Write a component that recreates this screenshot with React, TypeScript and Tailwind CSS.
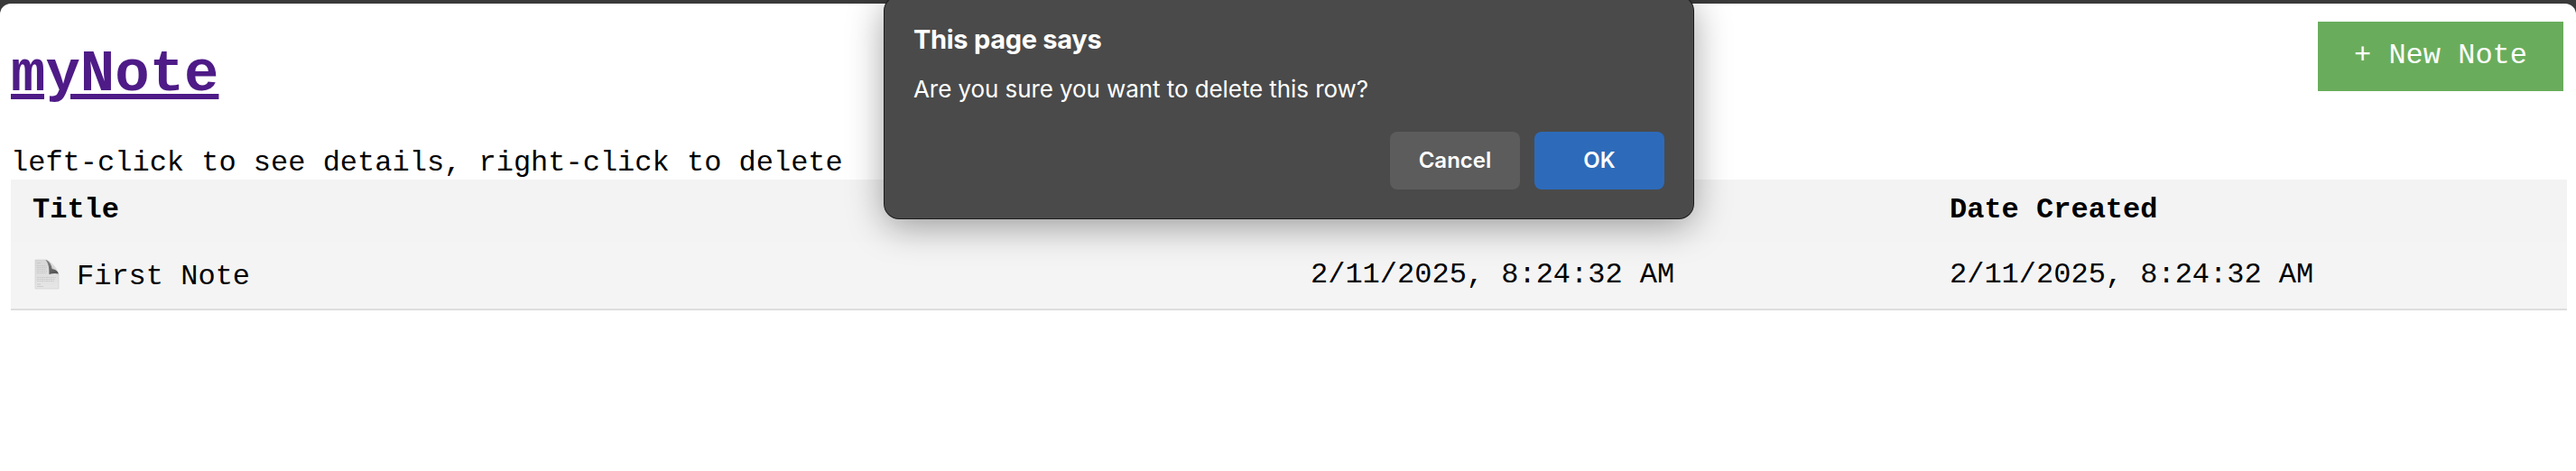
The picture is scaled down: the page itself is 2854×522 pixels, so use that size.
import React from "react";

type Note = { id: number; title: string; edited: string; created: string };

const notes: Note[] = [
  { id: 1, title: "First Note", edited: "2/11/2025, 8:24:32 AM", created: "2/11/2025, 8:24:32 AM" },
];

function PageIcon() {
  return (
    <svg className="ml-[2px] block h-[34px] w-[28px] shrink-0 -translate-y-px" viewBox="0 0 28 34">
      <defs>
        <linearGradient id="curl" x1="0" y1="0" x2="0.35" y2="1">
          <stop offset="0" stopColor="#8a8a8a" />
          <stop offset="1" stopColor="#555555" />
        </linearGradient>
        <linearGradient id="flap" x1="0" y1="1" x2="1" y2="0">
          <stop offset="0" stopColor="#8a8a8a" />
          <stop offset="0.5" stopColor="#d8d8d8" />
          <stop offset="1" stopColor="#f0f0f0" />
        </linearGradient>
        <linearGradient id="paper" x1="0" y1="0" x2="0" y2="1">
          <stop offset="0" stopColor="#d6d6d6" />
          <stop offset="1" stopColor="#e6e6e6" />
        </linearGradient>
      </defs>
      <path d="M1 1H14Q17 5 17 17Q24 15 27 17V33H1Z" fill="url(#paper)" stroke="#cfcfcf" strokeWidth="0.6" />
      <path d="M12.5 1Q16 1.5 18 5Q19.500 8 20 10Q25 11 27 16.500Q22 15.500 16.500 17Q16.800 6 12.500 1Z" fill="url(#curl)" />
      <path d="M14 1Q22 5 27 15Q24 11.500 19.500 11Q19 4.500 14 1Z" fill="url(#flap)" />
      <g stroke="#c8c8c8" strokeWidth="0.9">
        <path d="M3 4.500H7" />
        <path d="M3 7.500H13.500M3 9.500H14M3 11.500H13M3 13.500H14M3 15.500H13.500" strokeDasharray="2 0.5" />
        <path d="M3 20.500H24M3 22.500H23M3 24.500H22" strokeDasharray="2 0.5" />
        <path d="M3 28H7M3 30.500H10" />
      </g>
    </svg>
  );
}

function ConfirmDialog() {
  return (
    <div className="absolute left-[980px] top-[-4px] flex h-[246px] w-[896px] flex-col rounded-[16px] bg-[#4a4a4a] px-8 font-[Inter,sans-serif] text-white shadow-[0_0_0_1px_#1c1c1c,0_8px_40px_rgba(0,0,0,0.38)]">
      <h2 className="mt-[29px] h-[38px] whitespace-nowrap text-[29px] leading-[38px] font-bold tracking-[-0.3px]">This page says</h2>
      <p className="mt-[20px] h-[32px] whitespace-nowrap text-[26px] leading-[32px] tracking-[-0.08px]">Are you sure you want to delete this row?</p>
      <div className="mt-[31px] flex justify-end gap-4">
        <button className="h-16 w-36 rounded-[8px] bg-[#5c5c5c] pb-px text-[24px] font-semibold">Cancel</button>
        <button className="h-16 w-36 rounded-[8px] bg-[#2d6bba] pb-px text-[24px] font-semibold">OK</button>
      </div>
    </div>
  );
}

export default function App() {
  return (
    <div className="relative h-[522px] w-[2854px] overflow-hidden bg-[#3a3a3a] pt-1 font-['Liberation_Mono',monospace] text-[32px] leading-[36px] text-black">
      <div className="h-[518px] rounded-t-[12px] bg-white pl-3 pr-[10px]">
        <header className="flex h-[140px] items-start justify-between pr-1">
          <h1 className="mt-[43px] text-[64px] leading-[73px] font-bold">
            <a href="#" className="text-[#4e1b87] underline decoration-[6px] underline-offset-[4px]">myNote</a>
          </h1>
          <button className="mt-5 h-[77px] w-[272px] whitespace-nowrap bg-[#69ad5c] pb-px text-white">+ New Note</button>
        </header>
        <p className="mt-[19px] h-[36px]">left-click to see details, right-click to delete</p>
        <table className="w-full table-fixed border-collapse text-left">
          <thead>
            <tr className="h-[69px] bg-[#f3f3f3]">
              <th className="w-1/2 px-6 pb-px align-middle font-bold">Title</th>
              <th className="w-1/4 px-6"></th>
              <th className="w-1/4 px-6 pb-px align-middle font-bold">Date Created</th>
            </tr>
          </thead>
          <tbody>
            {notes.map((note) => (
              <tr key={note.id} className="h-[75px] border-b-2 border-[#dddddd] bg-[#f4f4f4]">
                <td className="px-6">
                  <div className="flex items-center">
                    <PageIcon />
                    <span className="ml-[19px] translate-y-[2px]">{note.title}</span>
                  </div>
                </td>
                <td className="px-6">{note.edited}</td>
                <td className="px-6">{note.created}</td>
              </tr>
            ))}
          </tbody>
        </table>
      </div>
      <ConfirmDialog />
    </div>
  );
}
